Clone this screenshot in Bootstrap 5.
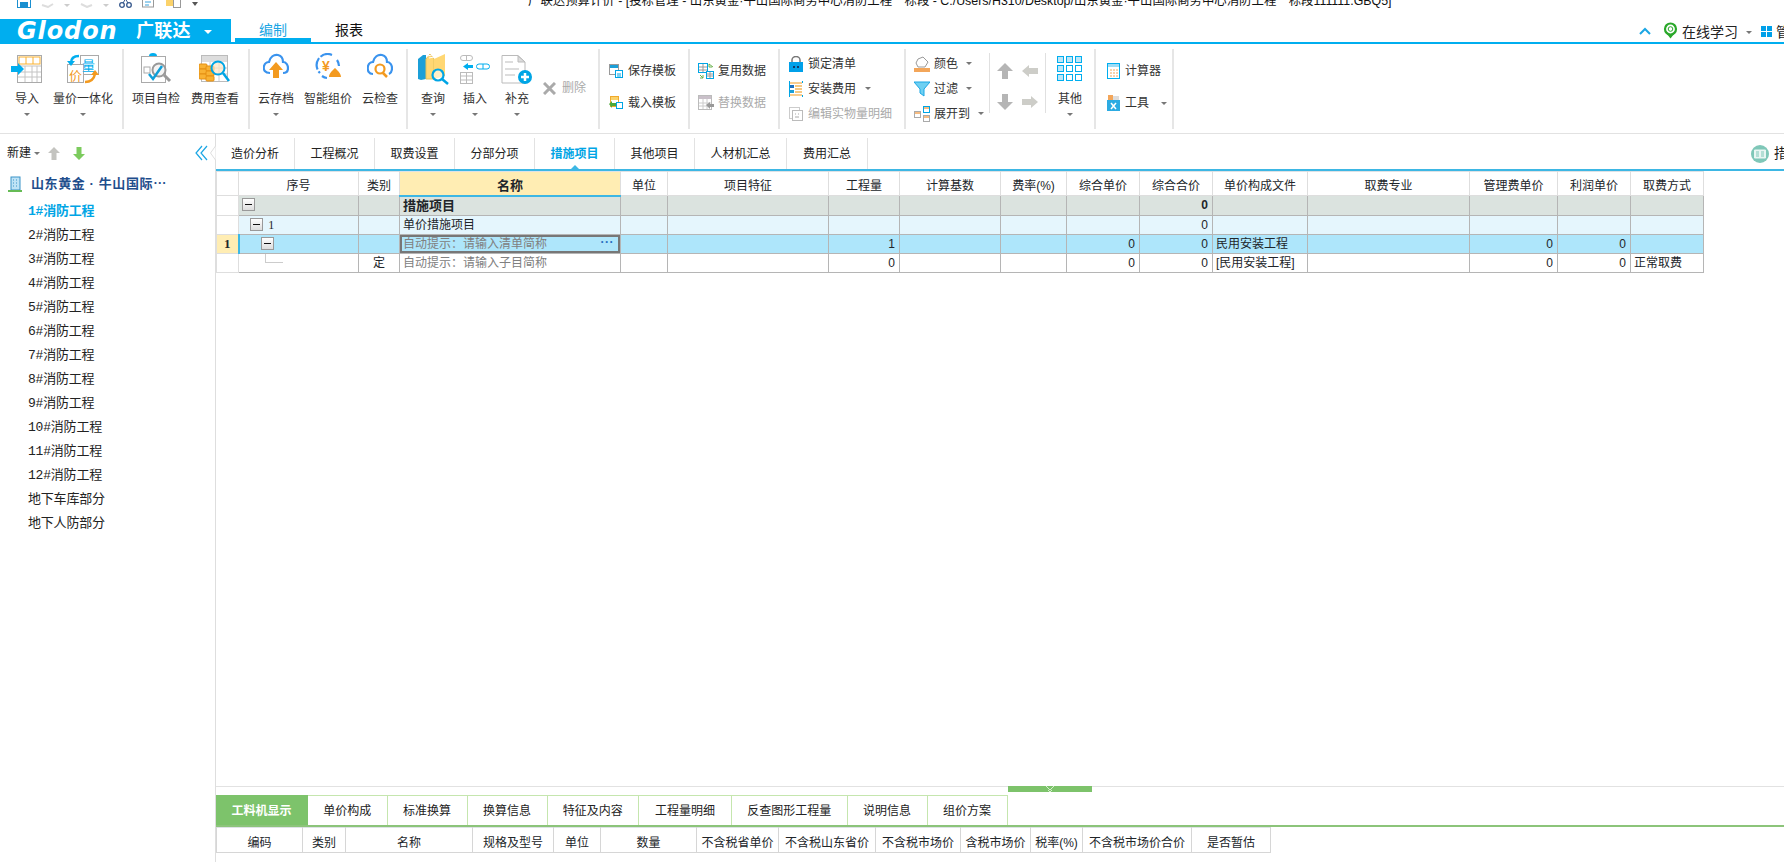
<!DOCTYPE html>
<html lang="zh-CN">
<head>
<meta charset="UTF-8">
<title>广联达预算计价</title>
<link rel="stylesheet" href="https://cdn.jsdelivr.net/npm/bootstrap@5.3.0/dist/css/bootstrap.min.css">
<style>
    html, body { height: 100%; overflow: hidden; }
    body { font-family: "Liberation Sans", "Noto Sans CJK SC", sans-serif; font-size: 12px; color: #222; background: #fff; }
    svg { display: block; flex: none; }
    .app-shell { width: 1784px; height: 862px; overflow: hidden; }

    /* title bar, its top is cut off in the shot */
    .title-bar { height: 19px; overflow: hidden; }
    .quick-icons { width: 528px; padding-left: 17px; gap: 10px; margin-top: -6px; }
    .title-text { font-size: 12.4px; line-height: 20px; margin-top: -9px; white-space: nowrap; color: #111; }

    /* menu row */
    .menu-bar { height: 25px; border-bottom: 2px solid #00aeef; }
    .logo-box { width: 231px; height: 25px; background: #00aeef; color: #fff; padding-left: 17px; margin-bottom: -2px; }
    .logo-en { font: italic 700 24px/25px "DejaVu Sans", sans-serif; letter-spacing: .9px; width: 119px; white-space: nowrap; }
    .logo-cn { font-size: 18px; line-height: 25px; font-weight: 700; letter-spacing: .2px; }
    .logo-tri { border-top: 4px solid #fff; border-left: 4px solid transparent; border-right: 4px solid transparent; margin-left: 13px; }
    .menu-tabs { margin-left: 4px; }
    .menu-tabs .nav-link { width: 76px; height: 23px; padding: 0; font-size: 14px; line-height: 23px; text-align: center; color: #111; border: 0; border-radius: 0; }
    .menu-tabs .nav-link.active { color: #1ba6e4; border-bottom: 4px solid #00aeef; height: 23px; }
    .menu-right { flex: 0 0 145px; margin-left: auto; overflow: hidden; white-space: nowrap; font-size: 14px; line-height: 23px; padding-top: 3px; }
    .green-ico { margin: -3px 3px 0 11px; }
    .chev-up { margin-top: -3px; }
    .win-ico { margin: -2px 0 0 9px; }

    /* ribbon */
    .ribbon { height: 90px; border-bottom: 1px solid #e2e2e2; }
    .rb-grp { margin: 5px 0 4px; height: 80px; border-right: 2px solid #e6e6e6; flex: none; }
    .g1 { width: 124px; } .g2 { width: 126px; } .g3 { width: 158px; } .g4 { width: 192px; padding-left: 4px; }
    .g5 { width: 90px; padding: 6px 0 0 9px; } .g6 { width: 90px; padding: 6px 0 0 8px; }
    .g7 { width: 126px; padding: 2px 0 0 9px; } .g8 { width: 190px; padding-left: 8px; } .g9 { width: 78px; padding: 6px 0 0 11px; }
    .rb-btn { --bs-btn-padding-x: 0; --bs-btn-padding-y: 0; --bs-btn-font-size: 12px; --bs-btn-color: #333; --bs-btn-border-width: 0; --bs-btn-border-radius: 0; --bs-btn-line-height: 18px; --bs-btn-disabled-color: #aaa; --bs-btn-disabled-opacity: 1; white-space: nowrap; }
    .rb-large { height: 75px; padding-top: 4px; }
    .rb-large .rb-ico { height: 32px; }
    .rb-large .rb-lbl { margin-top: 5px; }
    .w42 { width: 42px; } .w49 { width: 49px; } .w52 { width: 52px; } .w54 { width: 54px; } .w58 { width: 58px; } .w64 { width: 64px; }
    .rb-row { height: 32px; gap: 5px; }
    .rb-row-s { height: 25px; gap: 5px; }
    .col-84 .rb-row-s { gap: 4px; }
    .g6 .rb-row, .g9 .rb-row { gap: 4px; }
    .tri { display: inline-block; border-top: 3px solid #777; border-left: 3px solid transparent; border-right: 3px solid transparent; flex: none; }
    .rb-large .tri { margin-top: 5px; }
    .del-btn { height: 32px; margin: 23px 0 0 5px; gap: 6px; }
    .sub-sep { width: 1px; height: 60px; background: #e0e0e0; margin-top: 4px; flex: none; }
    .arrow-grid { grid-template-columns: 25px 25px; grid-auto-rows: 31px; width: 55px; padding: 6px 0 0 7px; }
    .col-84 { width: 76px; padding-top: 2px; }

    /* sidebar */
    .main-area { height: 728px; }
    .side-panel { width: 216px; border-right: 1px solid #dedede; flex: none; }
    .side-top { height: 38px; padding-left: 7px; }
    .side-top .tri { margin: 0 8px 0 3px; }
    .up-ico { margin-right: 13px; }
    .side-proj { height: 24px; padding-left: 8px; gap: 9px; color: #1f4e8c; font-size: 13px; font-weight: 700; line-height: 24px; letter-spacing: .6px; }
    .side-list { --bs-list-group-bg: transparent; --bs-list-group-border-width: 0; --bs-list-group-item-padding-x: 0; --bs-list-group-item-padding-y: 0; --bs-list-group-color: #222; padding-top: 4px; }
    .side-list .list-group-item { height: 24px; line-height: 24px; padding-left: 28px; font-size: 13px; font-family: "Liberation Mono", "Noto Sans CJK SC", monospace; letter-spacing: -.2px; }
    .side-list .item-on { color: #00a5e5; font-weight: 700; }
    .notch { margin: 0 -1px 0 auto; }

    /* sheet tabs */
    .sheet-tabs-bar { height: 37px; border-bottom: 2px solid #3db7e4; padding-top: 4px; }
    .sheet-tabs .nav-link { height: 31px; padding: 0; line-height: 33px; color: #222; font-size: 12px; text-align: center; border-right: 1px solid #e2e2e2; border-radius: 0; position: relative; }
    .sheet-tabs .nav-link.active { color: #00a5e5; font-weight: 700; }
    .sheet-tabs .nav-link.active::after { content: ""; position: absolute; left: 50%; bottom: 0; margin-left: -4px; border-bottom: 4px solid #3db7e4; border-left: 4px solid transparent; border-right: 4px solid transparent; }
    .tw78 { width: 79px; } .tw80 { width: 80px; } .tw92 { width: 92px; } .tw81 { width: 81px; }
    .sheet-right { margin-left: auto; flex: 0 0 33px; overflow: hidden; white-space: nowrap; font-size: 14px; gap: 5px; }

    /* main grid */
    .grid-main { table-layout: fixed; width: 1487px; font-size: 12px; }
    .grid-main th, .grid-main td { padding: 0 3px; height: 19px; line-height: 18px; border: 1px solid #b5b5b5; overflow: hidden; white-space: nowrap; position: relative; }
    .grid-main thead th { height: 24px; font-weight: 400; text-align: center; border-color: #dedede; border-top: 0; }
    .grid-main thead tr { border-bottom: 1px solid #dedede; }
    .grid-main th.name-head { --bs-table-bg: #ffedb3; font-size: 13px; font-weight: 700; border-bottom: 2px solid #3db7e4; }
    .grid-main .rowhead { border-color: #dedede; --bs-table-bg: #fff; padding: 0; text-align: center; }
    .grid-main .rowhead-on { --bs-table-bg: #ffedb3; border-right: 2px solid #3db7e4; font: 700 13px/18px "Liberation Serif", serif; }
    .row-grp td { --bs-table-bg: #dbe3df; }
    .row-sub td { --bs-table-bg: #e5f6fd; }
    .row-cur td { --bs-table-bg: #aee6fb; }
    .row-grp .rowhead, .row-sub .rowhead, .row-cur .rowhead { --bs-table-bg: #fff; }
    .row-cur .rowhead-on { --bs-table-bg: #ffedb3; }
    .grid-main .num { text-align: right; padding-right: 4px; font-family: "Liberation Sans", sans-serif; }
    .hint { color: #808080; }
    .fw-grp { font-size: 13px; font-weight: 700; }
    .grid-main td.cell-on { box-shadow: inset 0 0 0 2px #777; padding-right: 6px; }
    .dots { color: #2a6fc0; font-weight: 700; line-height: 14px; letter-spacing: .5px; }
    .tbox { display: inline-block; width: 13px; height: 13px; border: 1px solid #999; background: linear-gradient(#fff, #ddd); vertical-align: -2px; position: relative; }
    .tbox::after { content: ""; position: absolute; left: 2px; right: 2px; top: 5px; height: 1px; background: #111; }
    .ind1 { margin-left: 8px; } .ind2 { margin-left: 18px; }
    .tree-no { font-family: "Liberation Serif", serif; margin-left: 2px; }
    .tline-h { position: absolute; left: 26px; top: 8px; width: 18px; height: 1px; background: #ccc; }
    .tline-v { position: absolute; left: 26px; top: 0; width: 1px; height: 8px; background: #ccc; }

    /* lower panel */
    .low-panel { height: 76px; border-top: 1px solid #e2e2e2; position: relative; margin-top: auto; flex: none; }
    .low-handle { position: absolute; left: 792px; top: -1px; width: 84px; height: 6px; background: #7dc36b; }
    .low-tabs { margin-top: 8px; border-bottom: 2px solid #8cc47a; height: 32px; }
    .low-tabs .nav-link { height: 30px; padding: 0; line-height: 30px; color: #222; font-size: 12px; text-align: center; border: 1px solid #c5e6ae; border-width: 1px 1px 0 0; border-radius: 0; }
    .low-tabs .nav-link.active { background: #7dc36b; color: #fff; font-weight: 700; border-color: #7dc36b; }
    .lw92 { width: 92px; } .lw79 { width: 79.5px; } .lw80 { width: 80px; } .lw92b { width: 91.5px; } .lw93 { width: 93px; } .lw115 { width: 115.5px; }
    .grid-low { table-layout: fixed; width: 1054px; font-size: 12px; }
    .grid-low th { height: 25px; padding: 0; line-height: 18px; font-weight: 400; text-align: center; border: 1px solid #d6d6d6; border-top: 0; white-space: nowrap; overflow: hidden; }

    /* col widths */
    .c22 { width: 22px; } .c41 { width: 41px; } .c43 { width: 43px; } .c47 { width: 47px; } .c52 { width: 52px; } .c66 { width: 66px; } .c70 { width: 70px; } .c71 { width: 71px; } .c73 { width: 73px; } .c79 { width: 79px; } .c81 { width: 81px; } .c82 { width: 82px; } .c85 { width: 85px; } .c86 { width: 86px; } .c88 { width: 88px; } .c95 { width: 95px; } .c96 { width: 96px; } .c97 { width: 97px; } .c101 { width: 101px; } .c109 { width: 109px; } .c120 { width: 120px; } .c127 { width: 127px; } .c161 { width: 161px; } .c162 { width: 162px; } .c221 { width: 221px; }
</style>
</head>
<body>
<div class="app-shell d-flex flex-column">

    <div class="title-bar d-flex">
        <div class="quick-icons d-flex align-items-start">
            <svg width="14" height="14" viewBox="0 0 14 14"><rect x=".5" y=".5" width="13" height="13" fill="#fff" stroke="#1a8fd0"/><rect x="3" y="8" width="8" height="5" fill="#1a8fd0"/></svg>
            <svg width="13" height="14" viewBox="0 0 13 14"><path d="M1 11 L7 13 L12 10" fill="none" stroke="#ddd" stroke-width="2"/></svg>
            <svg width="6" height="14" viewBox="0 0 6 14"><path d="M0 10h6l-3 3z" fill="#ccc"/></svg>
            <svg width="13" height="14" viewBox="0 0 13 14"><path d="M1 10 L7 13 L12 11" fill="none" stroke="#ddd" stroke-width="2"/></svg>
            <svg width="6" height="14" viewBox="0 0 6 14"><path d="M0 10h6l-3 3z" fill="#ccc"/></svg>
            <svg width="13" height="14" viewBox="0 0 13 14"><circle cx="3" cy="11" r="2.3" fill="none" stroke="#35578c" stroke-width="1.3"/><circle cx="10" cy="11" r="2.3" fill="none" stroke="#35578c" stroke-width="1.3"/><path d="M4 9 L9 1 M9 9 L4 1" stroke="#35578c"/></svg>
            <svg width="14" height="14" viewBox="0 0 14 14"><rect x=".5" y=".5" width="11" height="12.5" fill="#fff" stroke="#999"/><path d="M3 5h6M3 8h6M3 11h4" stroke="#3aa3dc"/></svg>
            <svg width="15" height="14" viewBox="0 0 15 14"><rect x="0" y="0" width="7" height="12" fill="#fbd26a"/><rect x="7.500" y=".5" width="7" height="13" fill="#fff" stroke="#999"/></svg>
            <svg width="8" height="14" viewBox="0 0 8 14"><path d="M1 8h6l-3 4z" fill="#555"/></svg>
        </div>
        <div class="title-text">广联达预算计价 - [投标管理 - 山东黄金·牛山国际商务中心消防工程一标段 - C:/Users/H310/Desktop/山东黄金·牛山国际商务中心消防工程一标段111111.GBQ5]</div>
    </div>

    <div class="menu-bar d-flex flex-shrink-0">
        <div class="logo-box d-flex align-items-center">
            <span class="logo-en">Glodon</span><span class="logo-cn">广联达</span><span class="logo-tri"></span>
        </div>
        <ul class="nav menu-tabs">
            <li class="nav-item"><a class="nav-link active" href="#">编制</a></li>
            <li class="nav-item"><a class="nav-link" href="#">报表</a></li>
        </ul>
        <div class="menu-right d-flex align-items-center">
            <svg class="chev-up" width="12" height="8" viewBox="0 0 12 8"><path d="M1 7 L6 2 L11 7" fill="none" stroke="#1ba6e4" stroke-width="2"/></svg>
            <svg class="green-ico" width="17" height="17" viewBox="0 0 17 17"><circle cx="8.500" cy="7" r="5.500" fill="none" stroke="#2aa82a" stroke-width="2.200"/><circle cx="8.500" cy="7" r="2.300" fill="none" stroke="#2aa82a"/><path d="M5 12 L8.500 16.500 L12 12 Z" fill="#2aa82a"/></svg>
            <span>在线学习</span>
            <span class="tri ms-2"></span>
            <svg class="win-ico" width="11" height="11" viewBox="0 0 11 11"><path d="M0 0h5v5H0zM6 0h5v5H6zM0 6h5v5H0zM6 6h5v5H6z" fill="#00a0e9"/></svg>
            <span class="ms-1">管理</span>
        </div>
    </div>

    <div class="ribbon d-flex flex-shrink-0">
        <div class="rb-grp g1 d-flex">
            <button class="btn rb-btn rb-large w54 d-flex flex-column align-items-center">
                <span class="rb-ico"><svg width="32" height="32" viewBox="0 0 32 32"><rect x="6.500" y="2.500" width="24" height="27" fill="#fff" stroke="#aaa"/><path d="M7 13h23M7 19h23M7 24h23M14 13v16M21 13v16M26 13v16" stroke="#c4c4c4"/><rect x="8" y="4" width="21" height="7" fill="#fff" stroke="#f9b233"/><path d="M15 4v7M22 4v7" stroke="#f9b233"/><path d="M0 13h7v-3l6 6-6 6v-3H0z" fill="#00aeef"/></svg></span>
                <span class="rb-lbl">导入</span><span class="tri"></span>
            </button>
            <button class="btn rb-btn rb-large w58 d-flex flex-column align-items-center">
                <span class="rb-ico"><svg width="34" height="32" viewBox="0 0 34 32"><rect x="14.500" y="2.500" width="18" height="19" fill="#fff" stroke="#aaa"/><rect x="1.500" y="11.500" width="16" height="18" fill="#fff" stroke="#aaa"/><text x="16" y="17" font-size="13" fill="#00aeef">量</text><text x="3" y="27" font-size="13" fill="#f39a1f">价</text><path d="M13 3 C7 3 5 6 5 10" fill="none" stroke="#00aeef" stroke-width="2.500"/><path d="M1 8h8l-4 5z" fill="#00aeef"/><path d="M19 29 C25 29 28 26 29 21" fill="none" stroke="#f39a1f" stroke-width="2.500"/><path d="M25 22h8l-4-5z" fill="#f39a1f"/></svg></span>
                <span class="rb-lbl">量价一体化</span><span class="tri"></span>
            </button>
        </div>
        <div class="rb-grp g2 d-flex">
            <button class="btn rb-btn rb-large w64 d-flex flex-column align-items-center">
                <span class="rb-ico"><svg width="32" height="32" viewBox="0 0 32 32"><rect x="1.500" y="3.500" width="24" height="26" fill="#fff" stroke="#aaa"/><path d="M9 3a4 3 0 0 1 8 0z" fill="#00aeef"/><rect x="4" y="14" width="6" height="6" fill="none" stroke="#aaa"/><circle cx="19" cy="17" r="6.500" fill="#f4f4f4" stroke="#999" stroke-width="2"/><path d="M24 22 L30 28" stroke="#999" stroke-width="3"/><path d="M9 21 L13 26 L22 13" fill="none" stroke="#0f9fd8" stroke-width="2.500"/></svg></span>
                <span class="rb-lbl">项目自检</span>
            </button>
            <button class="btn rb-btn rb-large w54 d-flex flex-column align-items-center">
                <span class="rb-ico"><svg width="32" height="32" viewBox="0 0 32 32"><rect x="2.500" y="2.500" width="26" height="26" fill="#fff" stroke="#bbb"/><rect x="3" y="3" width="25" height="6" fill="#ddd"/><path d="M3 15h25M3 21h25M11 9v19M20 9v19" stroke="#ccc"/><rect x="0" y="11" width="8" height="5" rx="1" fill="#f9b233" stroke="#e58f12"/><rect x="0" y="16" width="8" height="5" rx="1" fill="#f9b233" stroke="#e58f12"/><rect x="0" y="21" width="8" height="5" rx="1" fill="#f9b233" stroke="#e58f12"/><rect x="7" y="13" width="8" height="5" rx="1" fill="#f9b233" stroke="#e58f12"/><rect x="7" y="18" width="8" height="5" rx="1" fill="#f9b233" stroke="#e58f12"/><rect x="7" y="23" width="8" height="5" rx="1" fill="#f9b233" stroke="#e58f12"/><circle cx="19" cy="15" r="6.500" fill="#fde5c4" fill-opacity=".7" stroke="#00a5e5" stroke-width="2"/><path d="M24 20 L30 28" stroke="#00a5e5" stroke-width="2.500"/></svg></span>
                <span class="rb-lbl">费用查看</span>
            </button>
        </div>
        <div class="rb-grp g3 d-flex">
            <button class="btn rb-btn rb-large w52 d-flex flex-column align-items-center">
                <span class="rb-ico"><svg width="26" height="32" viewBox="0 0 26 32"><path d="M7 20 C2 20 0 17 1 13 C2 10 4 9 6 9 C7 4 11 1 15 2 C19 3 20 6 20 9 C23 9 25 12 25 15 C25 18 23 20 20 20" fill="none" stroke="#3a93ee" stroke-width="2.200"/><path d="M13 9 L20 17 H16 V25 H10 V17 H6 Z" fill="#f39a1f"/></svg></span>
                <span class="rb-lbl">云存档</span><span class="tri"></span>
            </button>
            <button class="btn rb-btn rb-large w52 d-flex flex-column align-items-center">
                <span class="rb-ico"><svg width="26" height="32" viewBox="0 0 26 32"><path d="M17 2 A11 11 0 0 0 5 20" fill="none" stroke="#3a93ee" stroke-width="2.200" stroke-dasharray="12 2"/><path d="M22 7 A11 11 0 0 1 24 13" fill="none" stroke="#3a93ee" stroke-width="2.200"/><path d="M7 23 A11 11 0 0 0 12 25" fill="none" stroke="#3a93ee" stroke-width="2.200"/><text x="7" y="18" font-size="14" font-weight="700" fill="#f39a1f">¥</text><path d="M14 24 C14 20 18 17 20 15 C22 17 26 20 26 24 Z" fill="#f39a1f"/></svg></span>
                <span class="rb-lbl">智能组价</span>
            </button>
            <button class="btn rb-btn rb-large w52 d-flex flex-column align-items-center">
                <span class="rb-ico"><svg width="26" height="32" viewBox="0 0 26 32"><path d="M6 21 C2 21 0 18 1 13 C2 10 4 9 6 9 C7 4 11 1 15 2 C19 3 20 6 20 9 C23 9 25 12 25 15 C25 18 24 20 22 21" fill="none" stroke="#3a93ee" stroke-width="2.200"/><circle cx="13" cy="16" r="4.500" fill="#fff" stroke="#f39a1f" stroke-width="2.200"/><path d="M16 20 L20 24" stroke="#f39a1f" stroke-width="2.500"/></svg></span>
                <span class="rb-lbl">云检查</span>
            </button>
        </div>
        <div class="rb-grp g4 d-flex">
            <button class="btn rb-btn rb-large w42 d-flex flex-column align-items-center">
                <span class="rb-ico"><svg width="32" height="32" viewBox="0 0 32 32"><path d="M1 6 L6 2 L9 2 V26 L4 27 L1 26 Z" fill="#1b9fd8"/><path d="M9 6 L13 1 L17 6 L17 26 L9 26 Z" fill="#ffd773" stroke="#e3c25c"/><path d="M17 6 L28 1 V23 L17 26 Z" fill="#ffd773"/><path d="M10 3 L15 2M12 5 L17 4" stroke="#fff"/><circle cx="21" cy="22" r="5.500" fill="#fff" fill-opacity=".6" stroke="#00a5e5" stroke-width="2.200"/><path d="M25 26 L31 31" stroke="#00a5e5" stroke-width="2.500"/></svg></span>
                <span class="rb-lbl">查询</span><span class="tri"></span>
            </button>
            <button class="btn rb-btn rb-large w42 d-flex flex-column align-items-center">
                <span class="rb-ico"><svg width="30" height="32" viewBox="0 0 30 32"><rect x=".5" y="2.500" width="12" height="5" rx="2.500" fill="#fff" stroke="#bbb"/><path d="M6.500 3v4" stroke="#bbb"/><rect x=".5" y="19.500" width="12" height="11" fill="#fff" stroke="#bbb"/><path d="M1 23h11M1 27h11M6.500 20v10" stroke="#bbb"/><path d="M3 13.500 L8 10 V12 H13 V15 H8 V17 Z" fill="#00aeef"/><rect x="16.500" y="11" width="13" height="5" rx="2.500" fill="#fff" stroke="#00aeef"/><path d="M23 11v5" stroke="#00aeef"/></svg></span>
                <span class="rb-lbl">插入</span><span class="tri"></span>
            </button>
            <button class="btn rb-btn rb-large w42 d-flex flex-column align-items-center">
                <span class="rb-ico"><svg width="32" height="32" viewBox="0 0 32 32"><path d="M1 2.500 H17 L24 9 V30 H1 Z" fill="#fff" stroke="#bbb"/><path d="M17 3 V9 H24 Z" fill="#ddd" stroke="#bbb"/><path d="M4 9h8M4 16h14M4 22h10" stroke="#ddd" stroke-width="2"/><circle cx="24" cy="24" r="7" fill="#00a5e5"/><path d="M24 20v8M20 24h8" stroke="#fff" stroke-width="2.500"/></svg></span>
                <span class="rb-lbl">补充</span><span class="tri"></span>
            </button>
            <button class="btn rb-btn del-btn d-flex align-items-center" disabled>
                <svg width="13" height="13" viewBox="0 0 13 13"><path d="M1 1 L12 12 M12 1 L1 12" stroke="#aaa" stroke-width="3"/></svg>
                <span>删除</span>
            </button>
        </div>
        <div class="rb-grp g5">
            <button class="btn rb-btn rb-row d-flex align-items-center">
                <svg width="14" height="14" viewBox="0 0 14 14"><rect x=".5" y=".5" width="9" height="10" fill="#fff" stroke="#999"/><rect x="1" y="1" width="8" height="3" fill="#1b9fd8"/><rect x="6.500" y="6.500" width="7" height="7" fill="#fff" stroke="#00a5e5"/><path d="M8 10h4M8 12h4" stroke="#00a5e5"/></svg>
                <span>保存模板</span>
            </button>
            <button class="btn rb-btn rb-row d-flex align-items-center">
                <svg width="14" height="14" viewBox="0 0 14 14"><rect x="1.500" y=".5" width="8" height="10" fill="#fff" stroke="#f0a92c"/><rect x="2" y="1" width="7" height="3" fill="#fbd26a"/><rect x="7.500" y="6.500" width="6" height="6" fill="#fff" stroke="#00a5e5"/><path d="M0 8 L3 5 V7 H7 V10 H3 V12 Z" fill="#4da83a"/></svg>
                <span>载入模板</span>
            </button>
        </div>
        <div class="rb-grp g6">
            <button class="btn rb-btn rb-row d-flex align-items-center">
                <svg width="16" height="16" viewBox="0 0 16 16"><rect x=".5" y=".5" width="9" height="9" fill="#fff" stroke="#00a5e5"/><path d="M1 4h8M1 7h8M5 1v8" stroke="#999"/><rect x="8.500" y="8.500" width="7" height="7" fill="#fff" stroke="#00a5e5"/><path d="M9 11h6M9 13h6M12 9v6" stroke="#999"/><path d="M11 1 L15 4 M11 1v3h3" stroke="#6bb24e" fill="none"/><path d="M2 12 L5 15 M5 12v3H2" stroke="#6bb24e" fill="none"/></svg>
                <span>复用数据</span>
            </button>
            <button class="btn rb-btn rb-row d-flex align-items-center" disabled>
                <svg width="16" height="16" viewBox="0 0 16 16"><rect x=".5" y=".5" width="13" height="14" fill="#fff" stroke="#bbb"/><rect x="1" y="1" width="12" height="3" fill="#c9c0c9"/><path d="M1 8h12M1 11h12M5 4v10M9 4v10" stroke="#ccc"/><path d="M8 10 L12 7 V9 H16 V12 H12 V14 Z" fill="#999"/></svg>
                <span>替换数据</span>
            </button>
        </div>
        <div class="rb-grp g7">
            <button class="btn rb-btn rb-row-s d-flex align-items-center">
                <svg width="14" height="16" viewBox="0 0 14 16"><path d="M3 7 V4 a4 3.500 0 0 1 8 0 V7" fill="none" stroke="#777" stroke-width="1.500"/><rect x="0" y="6" width="14" height="10" fill="#00a0e9"/><path d="M4 10h2v2H4zM8 10h2v2H8z" fill="#123a66"/></svg>
                <span>锁定清单</span>
            </button>
            <button class="btn rb-btn rb-row-s d-flex align-items-center">
                <svg width="14" height="16" viewBox="0 0 14 16"><path d="M.5 0v16M13.500 0v2M13.500 14v2" stroke="#00a5e5"/><path d="M1 2h12M1 14h12" stroke="#f39a1f"/><path d="M6 5h7M6 8h7M6 11h7" stroke="#f3b65a" stroke-width="1.500"/><rect x="1" y="4" width="4" height="3" fill="#1b6fc0"/><rect x="1" y="9" width="4" height="3" fill="#1b9fd8"/></svg>
                <span>安装费用</span><span class="tri ms-1"></span>
            </button>
            <button class="btn rb-btn rb-row-s d-flex align-items-center" disabled>
                <svg width="14" height="14" viewBox="0 0 14 14"><rect x=".5" y=".5" width="10" height="11" fill="#fff" stroke="#ccc"/><rect x="3.500" y="3.500" width="10" height="10" fill="#fff" stroke="#bbb"/><path d="M6 7h1M9 7h1M6 10h4" stroke="#aaa"/></svg>
                <span>编辑实物量明细</span>
            </button>
        </div>
        <div class="rb-grp g8 d-flex">
            <div class="col-84">
                <button class="btn rb-btn rb-row-s d-flex align-items-center">
                    <svg width="16" height="16" viewBox="0 0 16 16"><path d="M4 3 L9 1 L14 6 L11 11 H4 L2 7 Z" fill="#fff" stroke="#999"/><rect x="0" y="12" width="16" height="4" fill="#f3a65a"/></svg>
                    <span>颜色</span><span class="tri ms-1"></span>
                </button>
                <button class="btn rb-btn rb-row-s d-flex align-items-center">
                    <svg width="16" height="16" viewBox="0 0 16 16"><path d="M0 1 H16 L10 8 V15 L6 12 V8 Z" fill="#6fd0f2" stroke="#1ba6e4"/></svg>
                    <span>过滤</span><span class="tri ms-1"></span>
                </button>
                <button class="btn rb-btn rb-row-s d-flex align-items-center">
                    <svg width="16" height="16" viewBox="0 0 16 16"><rect x=".5" y="5.500" width="6" height="6" fill="#fff" stroke="#aaa"/><rect x="9.500" y=".5" width="6" height="6" fill="#fff" stroke="#00a5e5"/><rect x="9.500" y="9.500" width="6" height="6" fill="#fff" stroke="#aaa"/><path d="M1 7h5M10 2h5M10 11h5" stroke="#f3a65a" stroke-width="1.500"/></svg>
                    <span>展开到</span><span class="tri ms-1"></span>
                </button>
            </div>
            <div class="sub-sep"></div>
            <div class="arrow-grid d-grid">
                <svg class="my-auto" width="16" height="16" viewBox="0 0 16 16"><path d="M8 0 L16 8 H11 V16 H5 V8 H0 Z" fill="#b5b5b5"/></svg>
                <svg class="my-auto" width="16" height="12" viewBox="0 0 16 12"><path d="M0 6 L7 0 V3 H16 V9 H7 V12 Z" fill="#cdcdc8"/></svg>
                <svg class="my-auto" width="16" height="16" viewBox="0 0 16 16"><path d="M8 16 L16 8 H11 V0 H5 V8 H0 Z" fill="#b5b5b5"/></svg>
                <svg class="my-auto" width="16" height="12" viewBox="0 0 16 12"><path d="M16 6 L9 0 V3 H0 V9 H9 V12 Z" fill="#cdcdc8"/></svg>
            </div>
            <div class="sub-sep"></div>
            <button class="btn rb-btn rb-large w49 d-flex flex-column align-items-center">
                <span class="rb-ico d-flex align-items-center"><svg width="26" height="26" viewBox="0 0 26 26"><g fill="#bfe6f7" stroke="#00aeef"><rect x=".5" y=".5" width="6" height="6"/><rect x="9.500" y=".5" width="6" height="6"/><rect x="18.500" y=".5" width="6" height="6"/><rect x=".5" y="9.500" width="6" height="6"/><rect x="9.500" y="9.500" width="6" height="6" fill="#fff"/><rect x="18.500" y="9.500" width="6" height="6" fill="#fff"/><rect x=".5" y="18.500" width="6" height="6"/><rect x="9.500" y="18.500" width="6" height="6" fill="#fff"/><rect x="18.500" y="18.500" width="6" height="6" fill="#fff"/></g></svg></span>
                <span class="rb-lbl">其他</span><span class="tri"></span>
            </button>
        </div>
        <div class="rb-grp g9">
            <button class="btn rb-btn rb-row d-flex align-items-center">
                <svg width="14" height="16" viewBox="0 0 14 16"><rect x=".5" y=".5" width="12" height="15" fill="#fff" stroke="#00aeef"/><rect x="1" y="1" width="11" height="3" fill="#9fdcf5"/><path d="M3 7h2M6 7h2M9 7h2M3 10h2M6 10h2M9 10h2M3 13h2M6 13h2M9 13h2" stroke="#f3a65a"/></svg>
                <span>计算器</span>
            </button>
            <button class="btn rb-btn rb-row d-flex align-items-center">
                <svg width="14" height="16" viewBox="0 0 14 16"><rect x="1" y="0" width="5" height="6" fill="#f3a65a"/><rect x="6" y="1" width="6" height="6" fill="#ddd"/><rect x="0" y="5" width="13" height="11" fill="#2cabe2"/><path d="M4 8 L9 14 M9 8 L4 14" stroke="#fff" stroke-width="1.500"/></svg>
                <span>工具</span><span class="tri ms-2"></span>
            </button>
        </div>
    </div>

    <div class="main-area d-flex">
        <div class="side-panel">
            <div class="side-top d-flex align-items-center">
                <span>新建</span><span class="tri"></span>
                <svg class="up-ico" width="12" height="13" viewBox="0 0 12 13"><path d="M6 0 L12 6 H8.500 V13 H3.500 V6 H0 Z" fill="#c4c4c0"/></svg>
                <svg width="12" height="13" viewBox="0 0 12 13"><path d="M6 13 L12 7 H8.500 V0 H3.500 V7 H0 Z" fill="#7ccb5e"/></svg>
                <svg class="notch" width="22" height="18" viewBox="0 0 22 18"><path d="M8 2 L2 9 L8 16 M13 2 L7 9 L13 16" fill="none" stroke="#1ba6e4" stroke-width="1.200"/><path d="M21.500 2 L16.500 9 L21.500 16" fill="#fff" stroke="#dedede"/></svg>
            </div>
            <div class="side-proj d-flex align-items-center">
                <svg width="14" height="16" viewBox="0 0 14 16"><rect x="3" y="1" width="9" height="13" fill="#bfe3f6" stroke="#3a93c8"/><path d="M5 4h1M8 4h1M5 7h1M8 7h1M5 10h1M8 10h1" stroke="#3a93c8"/><rect x="0" y="14" width="14" height="2" fill="#66bb55"/></svg>
                <span>山东黄金 · 牛山国际⋯</span>
            </div>
            <ul class="list-group side-list">
                <li class="list-group-item item-on">1#消防工程</li>
                <li class="list-group-item">2#消防工程</li>
                <li class="list-group-item">3#消防工程</li>
                <li class="list-group-item">4#消防工程</li>
                <li class="list-group-item">5#消防工程</li>
                <li class="list-group-item">6#消防工程</li>
                <li class="list-group-item">7#消防工程</li>
                <li class="list-group-item">8#消防工程</li>
                <li class="list-group-item">9#消防工程</li>
                <li class="list-group-item">10#消防工程</li>
                <li class="list-group-item">11#消防工程</li>
                <li class="list-group-item">12#消防工程</li>
                <li class="list-group-item">地下车库部分</li>
                <li class="list-group-item">地下人防部分</li>
            </ul>
        </div>

        <div class="flex-grow-1 d-flex flex-column overflow-hidden">
            <div class="sheet-tabs-bar d-flex flex-shrink-0">
                <ul class="nav sheet-tabs">
                    <li class="nav-item"><a class="nav-link tw78" href="#">造价分析</a></li>
                    <li class="nav-item"><a class="nav-link tw80" href="#">工程概况</a></li>
                    <li class="nav-item"><a class="nav-link tw80" href="#">取费设置</a></li>
                    <li class="nav-item"><a class="nav-link tw80" href="#">分部分项</a></li>
                    <li class="nav-item"><a class="nav-link tw80 active" href="#">措施项目</a></li>
                    <li class="nav-item"><a class="nav-link tw80" href="#">其他项目</a></li>
                    <li class="nav-item"><a class="nav-link tw92" href="#">人材机汇总</a></li>
                    <li class="nav-item"><a class="nav-link tw81" href="#">费用汇总</a></li>
                </ul>
                <div class="sheet-right d-flex align-items-center">
                    <svg width="18" height="18" viewBox="0 0 18 18"><circle cx="9" cy="9" r="9" fill="#7fc7b8"/><path d="M3.500 5h11v8h-11zM9 5v8" fill="#e9f6f3" stroke="#e9f6f3"/><path d="M5 7h3M5 9h3M5 11h3M10 7h3M10 9h3M10 11h3" stroke="#7fc7b8"/></svg>
                    <span>措施</span>
                </div>
            </div>

            <table class="table table-bordered mb-0 grid-main">
                <colgroup>
                    <col class="c22"><col class="c120"><col class="c41"><col class="c221"><col class="c47"><col class="c161"><col class="c71"><col class="c101"><col class="c66"><col class="c73"><col class="c73"><col class="c95"><col class="c162"><col class="c88"><col class="c73"><col class="c73">
                </colgroup>
                <thead>
                    <tr><th></th><th>序号</th><th>类别</th><th class="name-head">名称</th><th>单位</th><th>项目特征</th><th>工程量</th><th>计算基数</th><th>费率(%)</th><th>综合单价</th><th>综合合价</th><th>单价构成文件</th><th>取费专业</th><th>管理费单价</th><th>利润单价</th><th>取费方式</th></tr>
                </thead>
                <tbody>
                    <tr class="row-grp"><td class="rowhead"></td><td><span class="tbox"></span></td><td></td><td class="fw-grp">措施项目</td><td></td><td></td><td></td><td></td><td></td><td></td><td class="num fw-bold">0</td><td></td><td></td><td></td><td></td><td></td></tr>
                    <tr class="row-sub"><td class="rowhead"></td><td><span class="tbox ind1"></span> <span class="tree-no">1</span></td><td></td><td>单价措施项目</td><td></td><td></td><td></td><td></td><td></td><td></td><td class="num">0</td><td></td><td></td><td></td><td></td><td></td></tr>
                    <tr class="row-cur"><td class="rowhead rowhead-on">1</td><td><span class="tbox ind2"></span></td><td></td><td class="cell-on"><div class="d-flex justify-content-between"><span class="hint">自动提示：请输入清单简称</span><span class="dots">···</span></div></td><td></td><td></td><td class="num">1</td><td></td><td></td><td class="num">0</td><td class="num">0</td><td>民用安装工程</td><td></td><td class="num">0</td><td class="num">0</td><td></td></tr>
                    <tr><td class="rowhead"></td><td><span class="tline-v"></span><span class="tline-h"></span></td><td class="text-center">定</td><td class="hint">自动提示：请输入子目简称</td><td></td><td></td><td class="num">0</td><td></td><td></td><td class="num">0</td><td class="num">0</td><td>[民用安装工程]</td><td></td><td class="num">0</td><td class="num">0</td><td>正常取费</td></tr>
                </tbody>
            </table>

            <div class="low-panel">
                <div class="low-handle d-flex justify-content-center"><svg width="10" height="6" viewBox="0 0 10 6"><path d="M1 0 L5 4 L9 0 M3 4 L5 6 L7 4" fill="none" stroke="#d8f0cf"/></svg></div>
                <ul class="nav low-tabs">
                    <li class="nav-item"><a class="nav-link lw92 active" href="#">工料机显示</a></li>
                    <li class="nav-item"><a class="nav-link lw79" href="#">单价构成</a></li>
                    <li class="nav-item"><a class="nav-link lw80" href="#">标准换算</a></li>
                    <li class="nav-item"><a class="nav-link lw80" href="#">换算信息</a></li>
                    <li class="nav-item"><a class="nav-link lw92b" href="#">特征及内容</a></li>
                    <li class="nav-item"><a class="nav-link lw93" href="#">工程量明细</a></li>
                    <li class="nav-item"><a class="nav-link lw115" href="#">反查图形工程量</a></li>
                    <li class="nav-item"><a class="nav-link lw80" href="#">说明信息</a></li>
                    <li class="nav-item"><a class="nav-link lw80" href="#">组价方案</a></li>
                </ul>
                <table class="table table-bordered mb-0 grid-low">
                    <colgroup>
                        <col class="c86"><col class="c43"><col class="c127"><col class="c81"><col class="c47"><col class="c96"><col class="c82"><col class="c97"><col class="c85"><col class="c70"><col class="c52"><col class="c109"><col class="c79">
                    </colgroup>
                    <thead>
                        <tr><th>编码</th><th>类别</th><th>名称</th><th>规格及型号</th><th>单位</th><th>数量</th><th>不含税省单价</th><th>不含税山东省价</th><th>不含税市场价</th><th>含税市场价</th><th>税率(%)</th><th>不含税市场价合价</th><th>是否暂估</th></tr>
                    </thead>
                </table>
            </div>
        </div>
    </div>
</div>
<script src="https://cdn.jsdelivr.net/npm/bootstrap@5.3.0/dist/js/bootstrap.bundle.min.js"></script>
</body>
</html>
